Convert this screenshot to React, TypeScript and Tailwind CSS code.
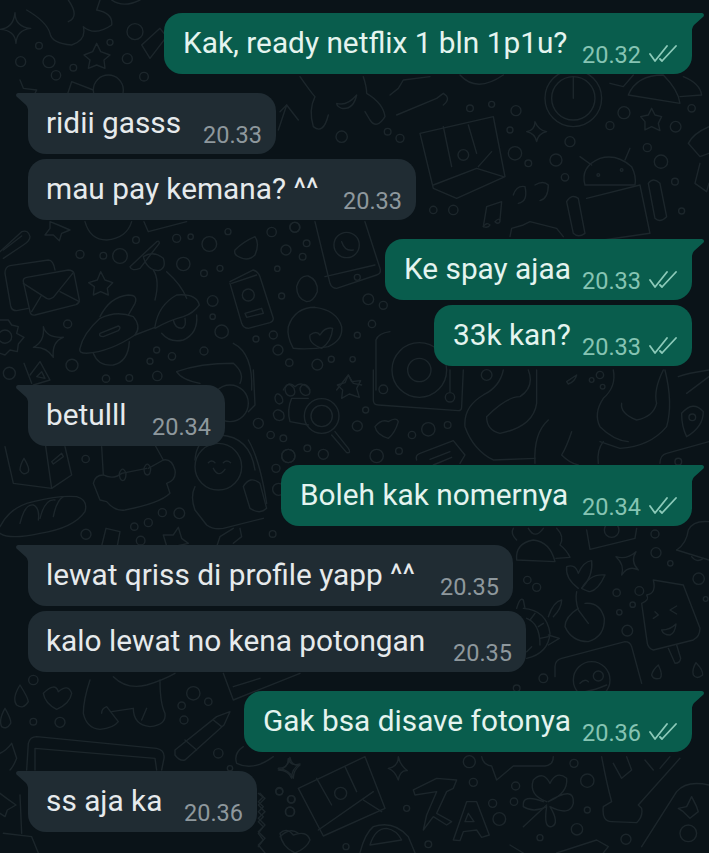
import React from "react";

type C = [number, number, number];
type Section = { x: number; y: number; c: C[]; p: string[] };

const sections: Section[] = [
  {
    x: 0, y: 220,
    c: [[240,103,12],[310,107,10],[360,108,22],[408,60,10],[530,55,12],[572,50,8],[628,72,22],[550,132,20],[612,160,10],[660,145,9],[684,35,9],[815,36,14],[884,22,15],[858,90,15],[920,70,10],[908,110,10],[832,146,8],[845,228,9],[638,243,16],[638,290,8],[665,335,20],[768,357,9],[820,345,12],[834,390,15],[868,428,11],[952,434,16],[994,418,9],[1058,418,8],[1072,346,9],[1116,312,11],[1105,238,16],[1150,256,12],[612,393,12],[516,409,11],[470,390,9],[450,424,9],[472,468,14],[388,474,10],[318,476,11],[216,436,18],[28,460,18],[203,312,12],[15,350,20],[745,225,18],[1072,172,9],[1040,75,38]],
    p: [
      "M0 95 L65 35 Q85 28 90 50 Q90 62 70 75 L10 115","M10 90 L65 48",
      "M150 5 L175 15 L210 30 L185 40 L178 62 L160 45 L135 45 L150 25Z",
      "M255 5 Q270 60 320 60 Q380 55 395 5","M432 5 L445 35 L560 5",
      "M85 265 L50 272 Q35 272 32 258 L15 160 Q15 140 30 137 L145 120 Q160 120 165 150",
      "M70 185 Q68 175 80 172 L205 150 Q218 150 222 160 L238 240 Q238 250 228 254 L105 285 Q92 287 90 275Z",
      "M70 190 L140 235 Q150 240 160 232 L218 160","M95 275 L125 225","M238 245 L180 215",
      "M302 155 L315 180 L338 188 L322 205 L325 225 L302 215 L280 225 L283 200 L266 188 L292 180Z",
      "M390 140 L470 65 Q478 60 478 70 L420 145 Q395 155 390 140Z","M430 110 Q460 90 490 115 Q500 145 475 152 Q440 150 430 110Z",
      "M460 150 Q480 180 465 240","M500 155 Q545 195 560 235",
      "M300 290 Q330 230 385 225 Q415 225 405 250 L385 285",
      "M240 385 Q250 340 300 295 Q350 270 400 290 Q425 320 405 345 Q330 395 260 400 Q235 400 240 385Z",
      "M300 340 L355 318 Q365 322 355 332 L310 350 Q295 350 300 340Z","M280 400 Q295 440 340 435 Q385 425 388 365",
      "M465 320 Q475 255 530 225 Q590 220 598 255 Q580 280 550 290 Q510 300 465 325","M485 340 Q510 370 550 360 Q595 340 590 285",
      "M520 300 Q525 325 545 325 Q560 320 555 295","M405 345 L465 322",
      "M0 300 L25 300 L35 315 L55 320 L50 340 L72 352 L55 372 L52 395 L30 390 L15 405 L0 400",
      "M130 320 Q140 355 190 352 Q155 365 160 412 Q140 380 100 382 Q135 365 130 320Z",
      "M72 430 L95 490","M90 465 L120 425 L150 480 L100 495","M110 470 L125 455 L135 475Z",
      "M705 90 Q730 65 765 50 Q780 70 765 105 Q745 125 720 112 Q700 105 705 90Z",
      "M690 185 L760 150 Q775 155 780 170 L820 295 Q820 305 810 308 L745 325 Q730 325 725 310 L690 190","M695 190 L770 165",
      "M735 280 L785 265 L790 280 L740 292Z",
      "M945 5 L990 190 Q995 205 1010 205 L1130 165 Q1145 160 1140 145 L1095 5","M975 170 L1125 135",
      "M1025 65 Q1035 95 1060 90",
      "M890 200 Q900 165 925 168 Q955 180 952 215 Q940 245 920 245 Q890 235 890 200Z",
      "M880 385 Q860 350 865 320 Q885 262 945 262 Q1010 270 1025 320 Q1030 360 985 380 Q930 390 880 385Z",
      "M930 345 Q950 330 960 345 Q975 320 998 325 Q995 365 965 385 Q925 370 930 345Z",
      "M700 370 Q760 400 755 510","M530 455 Q600 430 700 430 Q735 460 720 490","M530 455 Q545 480 600 490",
      "M1128 510 L1128 360 Q1135 340 1170 335","M1010 510 L1045 465 L1060 490 L1085 495",
      "M850 510 Q865 480 885 500 Q905 480 930 510",
    ],
  },
  {
    x: 220, y: 370,
    c: [[30,100,55],[305,138,52],[305,138,32],[598,0,82],[598,0,35],[490,58,13],[690,82,14],[115,160,15],[152,195,11],[190,205,10],[205,258,20],[262,235,10],[310,253,15],[437,120,9],[412,168,15],[576,195,11],[625,178,20],[683,165,10],[470,258,20],[537,243,10],[800,15,16],[1140,15,11],[1115,30,7],[1148,50,7],[1417,142,10],[1375,275,10]],
    p: [
      "M85 125 L105 105 L100 0","M0 195 Q90 200 105 300",
      "M165 82 Q170 62 185 80 Q195 100 178 102 Q165 100 165 82Z","M195 55 Q205 32 222 55 Q230 78 210 78 Q195 75 195 55Z","M240 55 Q250 32 268 55 Q275 78 255 76 Q240 72 240 55Z","M160 130 Q170 110 190 128 Q198 150 178 152 Q160 150 160 130Z",
      "M265 85 L215 85 Q200 120 210 155 L265 165","M345 185 L385 235 Q395 250 380 248 L335 195",
      "M385 15 L395 35 L422 32 L410 55 L418 82 L388 72 L365 85 L368 60 L352 45 L375 38Z",
      "M465 170 Q485 145 505 155 Q530 140 535 155 Q525 190 505 205 Q470 195 465 170Z",
      "M460 0 L460 90 Q460 105 475 105 L715 122 Q725 122 725 110 L730 0","M690 0 L690 65",
      "M850 0 Q840 50 790 75 Q730 110 735 170 Q760 240 820 270 L945 265",
      "M800 140 Q860 80 900 80 Q945 50 925 0","M800 140 Q800 180 840 190 Q940 170 950 100 L950 0",
      "M985 150 Q940 190 945 280","M1055 185 Q1040 230 1025 255 Q1050 280 1075 285",
      "M1180 0 Q1190 50 1150 85 Q1120 130 1140 170 Q1180 210 1225 215",
      "M1330 0 Q1300 60 1310 100 Q1300 140 1250 150 Q1200 130 1205 100","M1335 0 Q1360 100 1340 170 Q1290 230 1200 235 L1140 215","M1135 280 Q1130 240 1150 215",
      "M1385 130 Q1420 90 1450 125 Q1450 170 1400 200 Q1385 170 1385 130Z",
      "M1375 20 Q1400 10 1467 0","M1400 70 L1467 20",
      "M590 270 Q585 255 600 250 L700 212 L735 255 L720 280","M630 268 L690 245","M640 285 L695 262",
      "M1040 35 L1070 15 Q1065 35 1045 42Z","M1320 280 Q1320 255 1340 250 L1467 215",
    ],
  },
  {
    x: 0, y: 440,
    c: [[655,80,70],[257,57,11],[865,48,20],[828,85,12],[836,148,18],[258,283,15],[403,260,11],[445,248,12],[487,218,12],[538,220,16],[422,302,13],[818,282,10]],
    p: [
      "M15 20 L40 130 L155 145 L215 105 L195 20","M135 5 L155 145","M72 55 Q90 85 85 95 Q70 110 60 90 Q60 75 72 55Z","M155 65 L185 40 L190 50 L160 72Z",
      "M305 20 L310 105 Q285 105 280 130 L300 180 L320 185 Q345 215 375 210 Q480 190 510 160 L500 130 Q530 120 525 90 Q515 55 490 60 L465 15",
      "M310 105 Q340 120 365 100 L440 85","M490 60 L445 85","M358 100 Q368 75 378 100 Q378 122 368 122 Q358 120 358 100Z","M432 85 Q442 60 452 85 Q452 105 442 105 Q432 105 432 85Z",
      "M625 68 Q635 58 645 68","M670 68 Q680 58 692 68","M640 85 Q655 115 675 88",
      "M585 60 Q590 0 630 0","M745 0 Q780 60 800 190",
      "M585 140 Q570 170 585 210 L620 255 Q640 270 670 265 L790 235","M730 140 Q750 105 780 130 L800 205 Q780 225 750 205Z",
      "M650 320 L660 290 L700 265","M720 265 L725 290 L700 310",
      "M0 260 Q30 200 100 185 Q180 165 230 170 Q265 180 255 215 Q220 265 120 280 Q30 300 0 280",
      "M60 250 Q75 190 100 195 Q120 205 115 240","M120 235 Q135 175 165 180","M160 230 Q170 180 190 170",
      "M490 285 L520 285 L535 262 L545 295 L565 310 L530 318 L500 318Z","M305 318 L318 265 L360 275 L352 318",
    ],
  },
  {
    x: 510, y: 520,
    c: [[305,30,22],[435,42,12],[438,98,15],[481,130,8],[566,176,17],[587,237,7],[52,180,11],[80,202,12],[320,218,11],[388,213,13],[368,254,8],[328,277,8],[352,332,16],[100,475,13],[20,505,10],[245,480,55],[265,468,15]],
    p: [
      "M20 120 Q15 70 70 60 Q120 65 135 125Z","M20 60 Q0 40 10 25","M140 25 Q165 50 150 75 Q170 90 180 112 L138 115","M55 25 Q75 60 100 25",
      "M230 30 L240 88 L375 55 L380 25","M500 90 Q530 70 535 30 Q550 0 597 5","M500 90 L597 120","M545 110 Q560 130 580 115",
      "M318 110 Q350 120 378 95 Q360 125 385 150 Q355 135 335 165 Q345 135 318 110Z",
      "M205 205 Q165 175 170 140 Q195 130 205 160 Q220 125 245 122 Q250 170 215 205","M240 215 Q265 210 285 165 Q240 160 215 205 Q235 215 240 215",
      "M200 215 Q195 240 205 270 L235 310","M205 265 Q165 290 165 320 Q185 365 235 365 Q285 350 283 295 Q270 245 225 250",
      "M430 180 L520 195 L570 325 Q570 350 550 360 L430 390 Q415 385 412 370 L395 250 Q420 240 410 225 Q440 220 430 180Z",
      "M475 385 L495 430 Q510 430 512 415 L500 375","M435 275 L445 285 L430 295","M500 258 L480 270 L500 282","M455 330 Q480 330 498 312 Q495 340 480 345 Q460 345 455 330Z",
      "M20 265 Q30 230 40 240 L45 265","M115 290 Q130 245 155 240 Q155 265 130 290","M40 265 Q110 270 120 340 Q115 400 50 415","M50 295 Q90 310 90 375",
      "M75 280 L60 300","M100 310 L85 320","M115 350 L90 355","M65 380 L50 395","M115 345 L148 355 L115 375",
      "M135 470 L135 440 Q135 420 155 415 L345 365 Q360 365 365 380 L395 490","M210 490 Q225 475 235 485","M225 515 Q255 510 290 495",
      "M445 435 Q460 465 450 475 Q430 480 425 465 Q428 450 445 435Z","M558 428 Q580 450 578 465 Q560 480 550 465 Q545 450 558 428Z",
    ],
  },
  {
    x: 0, y: 670,
    c: [[100,30,14],[580,70,20],[625,95,11],[545,107,11],[552,150,12],[100,155,10],[180,157,15],[655,250,14],[838,365,10],[875,388,11],[870,425,13],[690,295,8]],
    p: [
      "M60 45 Q85 85 85 95 Q70 120 50 105 Q35 85 60 45Z","M15 115 Q35 150 32 160 Q20 180 5 170 Q-5 150 15 115Z",
      "M130 70 Q165 35 175 65 Q205 40 215 70 Q210 100 170 118 Q135 100 130 70Z",
      "M270 30 Q250 90 250 130 Q260 175 300 178 Q340 175 355 155 L320 110 Q305 115 305 130","M335 125 L400 115 Q400 165 450 170 Q500 165 495 130 Q480 100 480 30","M440 115 L425 150","M340 20 Q380 60 440 45 Q490 30 525 10",
      "M525 240 L650 140 L690 125 L672 165 L555 270 Q540 275 525 255Z","M640 150 L665 170","M555 210 L590 240",
      "M80 300 L85 220 Q90 200 110 200 L470 235 Q495 240 492 265 L485 300","M105 300 L105 235 L465 265 L470 300",
      "M10 490 L95 500 L115 549","M60 375 L65 490",
      "M730 230 Q700 250 710 280 Q760 305 820 260","M835 295 Q865 295 870 262 Q875 290 900 285 Q880 300 880 325 Q870 300 835 295Z",
      "M780 370 L790 380 L775 395 L790 410 L775 425 L790 440 L775 455 L790 470 L775 490 L790 510 L775 530",
      "M0 370 L20 385 L48 405 L22 420 L15 440 L0 430","M0 250 Q20 240 35 220 L50 265 Q40 290 30 300","M840 500 Q870 470 895 490",
      "M670 10 L700 90 L900 10","M700 50 L780 25",
    ],
  },
  {
    x: 250, y: 750,
    c: [[272,130,18],[1315,250,25],[88,123,11],[123,148,11],[120,185,14],[470,175,9],[288,290,9],[535,283,10],[670,97,12],[797,108,12],[728,160,12],[792,155,11],[748,207,19],[870,263,9],[981,238,17],[1128,268,15],[1012,180,9],[1012,92,20],[972,40,12],[658,35,18]],
    p: [
      "M85 60 Q115 55 115 25 Q120 50 150 42 Q125 55 125 85 Q115 60 85 60Z","M415 55 Q445 50 445 20 Q450 45 472 62 Q450 60 445 90 Q435 62 415 55Z",
      "M145 115 L345 20 L405 175 L220 258Z","M205 240 L370 125","M340 150 L395 185","M200 85 L245 165","M285 50 L320 125",
      "M490 120 L560 85 L620 90 L610 115 L590 125 L560 190 L605 215 L590 225 L550 200 L520 240 L530 195 L560 125 L495 135Z",
      "M610 270 L650 155 L680 155 L718 255 L695 262 L680 240 L640 245 L630 272Z","M645 215 L655 190 L672 215Z",
      "M695 20 Q700 45 725 48 L740 90 L790 48 L885 48 Q910 45 910 20",
      "M890 155 Q835 135 850 90 Q880 60 900 100 Q920 60 950 85 Q955 130 895 155 Q975 105 970 160 Q960 200 900 170 Q930 220 905 230 Q880 235 890 170 Q850 190 820 170 Q815 130 880 155","M890 165 L820 230",
      "M1055 20 Q1070 100 1085 155 L1060 170 Q1055 215 1085 215 L1160 218 Q1180 200 1175 175 L1165 165 L1290 25","M1090 40 L1115 85 L1145 60 L1130 20","M1185 30 L1210 60","M1260 20 L1230 55",
      "M1175 290 L1280 125 Q1310 90 1377 105","M1285 175 L1310 170 L1325 140 L1340 170 L1345 185 L1320 205 L1300 185Z",
      "M330 308 Q345 250 370 230 Q430 210 475 260 L495 308","M360 285 Q375 235 410 235 Q440 240 455 270Z",
      "M90 250 Q110 230 130 255 Q170 240 180 270 Q170 295 135 309 Q95 290 90 250Z",
      "M25 130 L45 145 L25 165 L45 185 L25 205 L45 225 L25 245 L45 265 L25 285 L45 309",
      "M780 285 L820 309","M920 309 L1040 270 L1075 290 L1060 309",
    ],
  },
  {
    x: 270, y: 70,
    c: [[910,85,85],[910,85,65],[985,315,4],[1055,300,4],[580,255,16],[600,115,10],[665,103,9],[738,122,15],[1062,128,18],[1020,167,12],[1217,170,16],[1265,115,11],[720,180,9],[900,215,15],[735,250,20],[775,280,10],[858,270,18],[885,322,11],[1132,233,12],[1173,275,20],[1215,335,10],[1235,423,9],[215,200,17],[353,185,10],[390,205,12],[490,420,11],[550,420,14],[75,472,15]],
    p: [
      "M25 180 L50 105 L85 150","M50 105 L30 125",
      "M90 20 Q125 70 135 80 Q115 120 130 170 Q160 195 175 135","M280 20 Q290 50 290 70 Q340 100 345 140 Q320 180 300 150 L285 125","M200 100 Q230 110 260 75 Q250 120 215 115 Q200 110 200 100Z",
      "M360 75 L385 55 L400 30 L480 20","M380 135 L500 85 L520 70 Q545 85 520 105",
      "M910 20 L910 85","M450 190 L670 140 L705 320 L560 385 L490 355Z","M490 345 L620 295 L700 320","M625 290 L665 245","M520 170 L545 290","M595 165 L620 250",
      "M1145 115 L1155 135 L1175 140 L1165 160 L1170 182 L1145 170 L1125 180 L1125 155 L1112 140 L1135 135Z",
      "M770 185 Q795 180 795 155 Q805 180 830 185 Q805 190 800 215 Q795 190 770 185Z",
      "M945 345 Q930 290 990 265 Q1040 250 1085 290 Q1100 320 1095 345Z","M930 260 L965 285","M1080 235 L1065 270",
      "M950 385 L1110 345 L1140 490 L1000 510","M890 395 Q905 370 925 385 L945 490 Q925 505 910 490Z","M1135 340 Q1150 320 1170 340 L1190 440 Q1170 460 1155 445Z",
      "M730 375 Q740 345 765 350 Q775 395 745 400","M795 345 Q820 330 835 345 Q835 385 810 392",
      "M640 470 L650 410 L695 395 L690 450","M640 470 Q650 455 660 465 Q655 475 640 470Z","M675 455 Q690 440 690 455 Q685 465 675 455Z",
      "M720 500 L725 475 L760 465 L780 455 L860 475 L880 500",
      "M1075 75 Q1100 15 1180 15 Q1225 60 1230 100Z","M1020 40 L1060 50 L1090 15","M1240 20 Q1290 40 1295 75 L1230 80",
      "M570 15 Q620 70 700 15","M1317 170 Q1270 190 1255 220 L1290 260 L1317 250","M1290 280 L1275 340 L1310 365 L1317 340",
    ],
  },
  {
    x: 0, y: 0,
    c: [[117,137,10],[62,185,15],[147,185,18],[168,226,14],[220,203,10],[330,127,9],[405,95,24],[382,176,15],[432,230,13],[325,270,45]],
    p: [
      "M45 38 Q45 80 92 85 Q50 90 48 130 Q45 90 0 88 Q40 85 45 38Z",
      "M80 30 Q140 65 150 100 Q155 130 215 135 Q260 120 250 80 Q285 110 335 75 Q340 40 290 30 L300 0","M205 0 Q240 50 205 65",
      "M290 130 L302 155 L330 165 L312 180 L315 205 L290 195 L265 205 L270 180 L252 165 L278 155Z",
      "M425 135 L480 85 L500 110 L450 175Z","M200 290 L215 245 L280 270","M60 240 L70 265 L110 270 L100 290","M335 0 Q370 25 420 0",
    ],
  },
];

const Doodles = () => (
  <svg className="absolute inset-0 blur-[0.5px]" width="709" height="853" viewBox="0 0 709 853" fill="none" stroke="#1c262b" strokeLinecap="round" strokeLinejoin="round">
    {sections.map((s, i) => (
      <g key={i} transform={`translate(${s.x} ${s.y}) scale(0.3333)`} strokeWidth="4.2">
        {s.c.map(([x, y, r], j) => <circle key={j} cx={x} cy={y} r={r} />)}
        {s.p.map((d, j) => <path key={j} d={d} />)}
      </g>
    ))}
  </svg>
);

const Ticks = () => (
  <svg width="28" height="19" viewBox="0 0 28 19" fill="none" stroke="#8ccab9" strokeWidth="1.8" strokeLinecap="round" strokeLinejoin="round" className="ml-[8px] mt-[3px]">
    <path d="M1 10 L6 17 L18 2" />
    <path d="M11 15 L13 17 L27 2" />
  </svg>
);

type Msg = { text: string; time: string; sent?: boolean; tail?: boolean; w: string; m: string };

const msgs: Msg[] = [
  { text: "Kak, ready netflix 1 bln 1p1u?", time: "20.32", sent: true, tail: true, w: "w-[528px]", m: "mt-[13px]" },
  { text: "ridii gasss", time: "20.33", tail: true, w: "w-[248px]", m: "mt-[19px]" },
  { text: "mau pay kemana? ^^", time: "20.33", w: "w-[388px]", m: "mt-[5px]" },
  { text: "Ke spay ajaa", time: "20.33", sent: true, tail: true, w: "w-[307px]", m: "mt-[19px]" },
  { text: "33k kan?", time: "20.33", sent: true, w: "w-[258px]", m: "mt-[5px]" },
  { text: "betulll", time: "20.34", tail: true, w: "w-[197px]", m: "mt-[19px]" },
  { text: "Boleh kak nomernya", time: "20.34", sent: true, tail: true, w: "w-[411px]", m: "mt-[19px]" },
  { text: "lewat qriss di profile yapp ^^", time: "20.35", tail: true, w: "w-[485px]", m: "mt-[19px]" },
  { text: "kalo lewat no kena potongan", time: "20.35", w: "w-[498px]", m: "mt-[5px]" },
  { text: "Gak bsa disave fotonya", time: "20.36", sent: true, tail: true, w: "w-[448px]", m: "mt-[19px]" },
  { text: "ss aja ka", time: "20.36", tail: true, w: "w-[229px]", m: "mt-[19px]" },
];

const Bubble = ({ text, time, sent, tail, w, m }: Msg) => (
  <div
    className={`relative h-[61px] rounded-[18px] flex justify-between pt-[12px] ${w} ${m} ${
      sent ? "self-end mr-[17px] bg-[#095d4d] pl-[19px] pr-[15px]" : "self-start ml-[28px] bg-[#202c33] pl-[18px] pr-[14px]"
    } ${tail ? (sent ? "rounded-tr-none" : "rounded-tl-none") : ""}`}
  >
    {tail && (
      <svg className={`absolute top-0 ${sent ? "left-full -ml-px" : "right-full -mr-px"}`} width="14" height="22" viewBox="0 0 14 22">
        <path
          d={sent ? "M0 0 L11 0 Q14 1 12.5 3.5 L3 12 Q0.5 15 0.5 22 L0 22Z" : "M14 0 L3 0 Q0 1 1.5 3.5 L11 12 Q13.5 15 13.5 22 L14 22Z"}
          fill={sent ? "#095d4d" : "#202c33"}
        />
      </svg>
    )}
    <span className={`text-[29.8px] leading-[36px] whitespace-nowrap ${sent ? "text-[#e4f4ef]" : "text-[#e6eaec]"}`}>{text}</span>
    <span className="flex items-start pt-[16px] shrink-0">
      <span className={`text-[23.5px] leading-[28px] ${sent ? "text-[#86c4b3]" : "text-[#8e989d]"}`}>{time}</span>
      {sent && <Ticks />}
    </span>
  </div>
);

export default function App() {
  return (
    <div className="relative w-[709px] h-[853px] overflow-hidden bg-[#0a1318] font-['Roboto',sans-serif]">
      <Doodles />
      <div className="relative flex flex-col">
        {msgs.map((m, i) => <Bubble key={i} {...m} />)}
      </div>
    </div>
  );
}
